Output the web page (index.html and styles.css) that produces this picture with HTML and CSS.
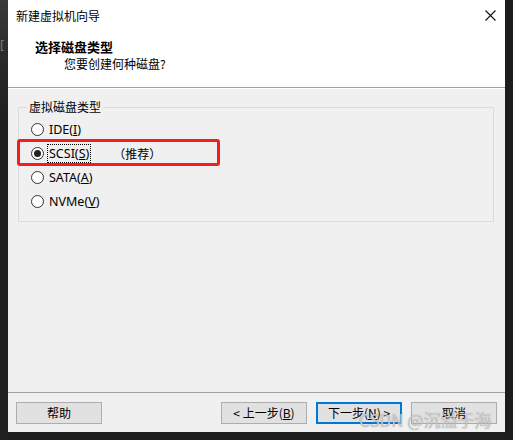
FILE: index.html
```html
<!DOCTYPE html>
<html lang="zh-CN">
<head>
<meta charset="utf-8">
<title>新建虚拟机向导</title>
<link rel="stylesheet" href="styles.css">
</head>
<body>
<div class="screen">
  <div class="strip strip-left"><span class="bracket">[</span></div>
  <div class="dialog">
    <div class="titlebar">
      <span class="title">新建虚拟机向导</span>
      <span class="close">
        <svg width="11" height="11" viewBox="0 0 11 11"><path d="M0.5 0.5 L10.5 10.5 M10.5 0.5 L0.5 10.5" stroke="#111" stroke-width="1.1" fill="none"/></svg>
      </span>
    </div>
    <div class="header">
      <div class="heading">选择磁盘类型</div>
      <div class="subtitle">您要创建何种磁盘?</div>
    </div>
    <div class="body">
      <fieldset class="group">
        <legend class="legend">虚拟磁盘类型</legend>
        <div class="row"><span class="radio"></span><span class="label">IDE(<u>I</u>)</span></div>
        <div class="row"><span class="radio checked"></span><span class="label focus">SCSI(<u>S</u>)</span><span class="rec">（推荐）</span></div>
        <div class="row"><span class="radio"></span><span class="label">SATA(<u>A</u>)</span></div>
        <div class="row"><span class="radio"></span><span class="label">NVMe(<u>V</u>)</span></div>
      </fieldset>
    </div>
    <div class="footer">
      <button class="btn">帮助</button>
      <div class="spacer"></div>
      <button class="btn">&lt; 上一步(<u>B</u>)</button>
      <button class="btn default">下一步(<u>N</u>) &gt;</button>
      <button class="btn">取消</button>
    </div>
    <div class="highlight"></div>
    <div class="watermark">CSDN @沉溢于海</div>
  </div>
  <div class="strip strip-right"></div>
</div>
</body>
</html>
```
FILE: styles.css
```css
* { box-sizing: border-box; }
html, body { margin: 0; padding: 0; }
body {
  background: #1e1e1e;
  width: 513px;
  height: 440px;
  overflow: hidden;
  font-family: "Noto Sans", "Noto Sans CJK SC", sans-serif;
  font-size: 12px;
  color: #000;
}
.screen {
  display: flex;
  height: 440px;
}
.strip {
  width: 8px;
  height: 440px;
  background: #1f1f1f;
  flex: none;
}
.strip-left {
  background: linear-gradient(#3a3a3a 0, #2a2a2a 60px, #1f1f1f 120px);
  position: relative;
  overflow: hidden;
}
.bracket {
  position: absolute;
  left: 0;
  top: 36px;
  color: #7a7a7a;
  font-size: 12px;
}
.strip-right { background: #1c1c1c; }
.dialog {
  width: 497px;
  height: 432px;
  background: #f0f0f0;
  display: flex;
  flex-direction: column;
  position: relative;
  flex: none;
}
.titlebar {
  height: 30px;
  background: #fff;
  display: flex;
  align-items: center;
  justify-content: space-between;
  padding-left: 8px;
}
.title {
  font-family: "Noto Sans CJK SC", sans-serif;
  font-size: 12px;
}
.close {
  width: 30px;
  height: 30px;
  display: flex;
  align-items: center;
  justify-content: center;
}
.header {
  background: #fff;
  height: 58px;
  padding: 8px 0 0 27px;
  border-bottom: 1px solid #a0a0a0;
}
.heading {
  font-family: "Noto Sans CJK SC", sans-serif;
  font-weight: bold;
  font-size: 13px;
  line-height: 17px;
}
.subtitle {
  font-family: "Noto Sans CJK SC", sans-serif;
  font-size: 12px;
  line-height: 17px;
  padding-left: 29px;
}
.body {
  flex: 1;
  padding: 10px 11px 0 10px;
  border-top: 1px solid #fff;
}
.group {
  margin: 0;
  border: 1px solid #dcdcdc;
  padding: 2px 12px 8px 12px;
  min-width: 0;
}
.legend {
  padding: 0 2px;
  margin-left: -4px;
  font-family: "Noto Sans CJK SC", sans-serif;
  font-size: 12px;
  line-height: 16px;
  color: #000;
}
.row {
  height: 24px;
  display: flex;
  align-items: center;
}
.radio {
  width: 13px;
  height: 13px;
  border: 1px solid #333;
  border-radius: 50%;
  background: #fff;
  margin-right: 4px;
  display: flex;
  align-items: center;
  justify-content: center;
  flex: none;
}
.radio.checked::after {
  content: "";
  width: 7px;
  height: 7px;
  border-radius: 50%;
  background: #222;
}
.label {
  font-size: 12.5px;
  line-height: 17px;
  padding: 0 1px;
}
.label.focus {
  outline: 1px dotted #000;
  outline-offset: 0;
}
.rec {
  font-family: "Noto Sans CJK SC", sans-serif;
  font-size: 12px;
  margin-left: 23px;
}
.footer {
  height: 40px;
  border-top: 1px solid #a0a0a0;
  display: flex;
  align-items: flex-start;
  padding: 9px 8px 0 8px;
  gap: 9px;
}
.spacer { flex: 1; }
.btn {
  width: 86px;
  height: 22px;
  background: #e1e1e1;
  border: 1px solid #adadad;
  font-family: "Noto Sans CJK SC", sans-serif;
  font-size: 12px;
  color: #000;
  padding: 0;
  line-height: 18px;
}
.btn.default {
  border: 2px solid #0078d7;
}
.highlight {
  position: absolute;
  left: 9px;
  top: 139px;
  width: 203px;
  height: 27px;
  border: 3px solid #f21d1d;
  border-radius: 3px;
}
.watermark {
  position: absolute;
  left: 351px;
  top: 409px;
  font-family: "Noto Sans CJK SC", sans-serif;
  font-size: 17px;
  line-height: 22px;
  color: rgba(215, 215, 215, 0.85);
  text-shadow: 0 0 1px rgba(110, 110, 110, 0.75);
  white-space: nowrap;
}
```
